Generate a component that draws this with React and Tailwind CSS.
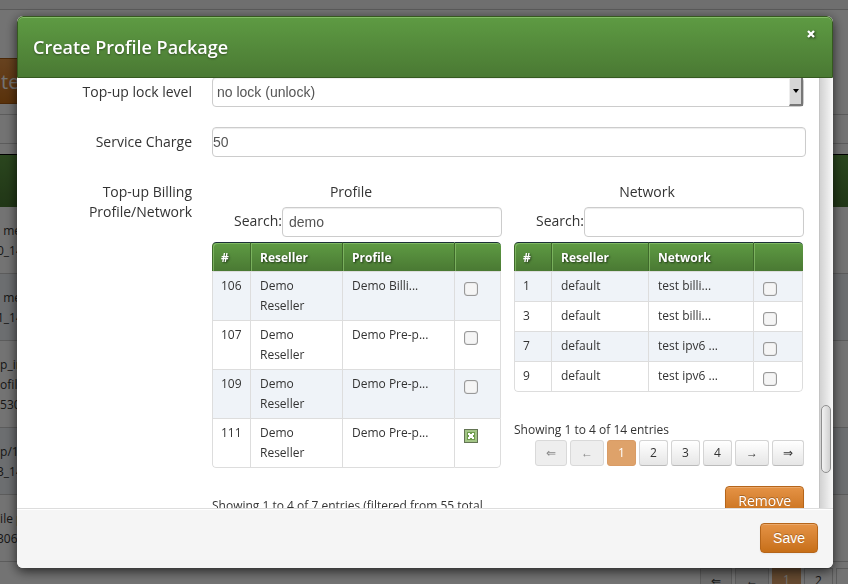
const PROFILES = [
  { id: 106, reseller: "Demo Reseller", name: "Demo Billi..." },
  { id: 107, reseller: "Demo Reseller", name: "Demo Pre-p..." },
  { id: 109, reseller: "Demo Reseller", name: "Demo Pre-p..." },
  { id: 111, reseller: "Demo Reseller", name: "Demo Pre-p...", checked: true },
];

const NETWORKS = [
  { id: 1, reseller: "default", name: "test billi..." },
  { id: 3, reseller: "default", name: "test billi..." },
  { id: 7, reseller: "default", name: "test ipv6 ..." },
  { id: 9, reseller: "default", name: "test ipv6 ..." },
];

const PAGE_ROWS = [
  { lines: ["\u00a0\u00a0me", "0_14"] },
  { lines: ["\u00a0\u00a0me", "1_14"] },
  { lines: ["\u00a0p_in", "\u00a0ofile", "\u00a0530"] },
  { lines: ["\u00a0p/1", "3_14"] },
  { lines: ["\u00a0ile p", "306"] },
];

const PAGES = [
  { label: "⇐", width: "w-8", state: "disabled" },
  { label: "←", width: "w-[34px]", state: "disabled" },
  { label: "1", width: "w-[29px]", state: "active" },
  { label: "2", width: "w-[29px]" },
  { label: "3", width: "w-[29px]" },
  { label: "4", width: "w-[29px]" },
  { label: "→", width: "w-[34px]" },
  { label: "⇒", width: "w-8" },
];

const FIELD =
  "h-[30px] rounded border border-[#ccc] bg-white font-['Liberation_Sans',sans-serif] text-sm text-[#555] shadow-[inset_0_1px_1px_rgba(0,0,0,0.075)] outline-none";
const ORANGE =
  "h-[30px] rounded border border-[#b5651a] bg-linear-to-b from-[#e59345] to-[#c76f17] px-3 text-sm leading-5 text-white [text-shadow:0_-1px_0_rgba(0,0,0,0.25)] shadow-[inset_0_1px_0_rgba(255,255,255,0.2),0_1px_2px_rgba(0,0,0,0.05)]";

function pageClass(state) {
  if (state === "active") return "border-[#d99c66] bg-[#dea26a] text-white";
  if (state === "disabled") return "border-[#d9d9d9] bg-[#eee] text-[#888]";
  return "border-[#d4d4d4] border-b-[#bbb] bg-linear-to-b from-white to-[#e6e6e6] text-[#333]";
}

function Pagination() {
  return (
    <nav className="flex justify-end gap-[3px]" aria-label="Pages">
      {PAGES.map((p) => (
        <button
          key={p.label}
          type="button"
          disabled={p.state === "disabled"}
          className={`h-[26px] shrink-0 rounded-[3px] border text-center text-xs leading-5 ${p.width} ${pageClass(p.state)}`}
        >
          {p.label}
        </button>
      ))}
    </nav>
  );
}

function PickTable({ title, columns, rows }) {
  const th =
    "h-[29px] border-t border-l border-t-[#1c3038] border-l-[#3f692b] bg-linear-to-b from-[#5e9b43] to-[#4a7933] pt-0.5 text-left text-xs font-bold text-white [text-shadow:1px_1px_2px_rgba(0,0,0,0.6)] shadow-[inset_1px_1px_0_rgba(140,195,110,0.7)]";
  const td = "border-t border-l border-[#ddd] py-1 align-top leading-5";
  return (
    <table className="mt-[5px] mr-px w-[calc(100%-1px)] table-fixed border-separate border-spacing-0 overflow-hidden rounded text-xs">
      <colgroup>
        {columns.map((c, i) => <col key={i} className={c} />)}
        <col />
      </colgroup>
      <thead>
        <tr>
          <th className={`${th} rounded-tl pl-2`}>#</th>
          <th className={`${th} pl-[9px]`}>Reseller</th>
          <th className={`${th} pl-[9px]`}>{title}</th>
          <th className={`${th} rounded-tr`} aria-label="Selected" />
        </tr>
      </thead>
      <tbody className="[&>tr:last-child>td]:border-b [&>tr:last-child>td:first-child]:rounded-bl [&>tr:last-child>td:last-child]:rounded-br">
        {rows.map((r) => (
          <tr key={r.id} className="h-[30px] odd:bg-[#eff3f8] last:h-[31px]">
            <td className={`${td} pl-2`}>{r.id}</td>
            <td className={`${td} pr-2 pl-[9px]`}>{r.reseller}</td>
            <td className={`${td} pr-2 pl-[9px]`}>{r.name}</td>
            <td className={`${td} border-r pl-[9px]`}>
              <span className="relative mt-1.5 block size-3.5">
                <input
                  type="checkbox"
                  defaultChecked={r.checked}
                  aria-label={`${title} ${r.id}`}
                  className="peer block size-3.5 appearance-none rounded-[3px] border border-[#999] bg-[#f5f5f5] shadow-[inset_0_0_1px_rgba(0,0,0,0.4)]"
                />
                <svg viewBox="0 0 14 14" className="pointer-events-none absolute inset-0 hidden size-3.5 peer-checked:block" aria-hidden="true">
                  <rect width="14" height="14" fill="#a3c586" />
                  <rect x=".5" y=".5" width="13" height="13" fill="none" stroke="#222" strokeDasharray="1 1" />
                  <rect x="3" y="3" width="8" height="8" fill="#6d9b4c" />
                  <path d="M4 4h2v1h2V4h2v2H9v2h1v2H8V9H6v1H4V8h1V6H4z" fill="#fff" />
                </svg>
              </span>
            </td>
          </tr>
        ))}
      </tbody>
    </table>
  );
}

function Picker({ title, titleClass, search, columns, rows, info, children }) {
  const id = `search-${title.toLowerCase()}`;
  return (
    <section className="min-w-0">
      <h4 className={`text-center leading-5 ${titleClass}`}>{title}</h4>
      <div className="mt-[5px] flex justify-end">
        <label htmlFor={id} className="pt-1 leading-5">Search:</label>
        <input id={id} type="text" defaultValue={search} className={`${FIELD} w-[220px] px-1.5`} />
      </div>
      <PickTable title={title} columns={columns} rows={rows} />
      <p className="mt-7 text-xs leading-5">{info}</p>
      {children}
    </section>
  );
}

function PageBehind() {
  return (
    <div className="h-screen overflow-hidden bg-white" aria-hidden="true">
      <div className="h-[10px] border-b border-[#c8c8c8] bg-[#f6f6f6]" />
      <div className="mt-12 h-[46px] w-[120px] border border-l-0 border-[#a85a10] bg-linear-to-b from-[#e59345] to-[#c76f17] pl-px text-xl leading-[46px] text-white">te</div>
      <div className="mt-2.5 h-[30px] border-y border-[#ccc]" />
      <div className="mt-2.5 h-[53px] border-t border-black bg-linear-to-b from-[#5e9b43] to-[#4a7933]" />
      {PAGE_ROWS.map((row, i) => (
        <div key={i} className="border-b border-[#ccc] pt-3.5 pb-3 text-xs leading-5 odd:bg-white even:bg-[#eff3f8]">
          {row.lines.map((l) => <p key={l} className="-ml-[3px]">{l}</p>)}
        </div>
      ))}
      <div className="mt-1.5 flex justify-end gap-[3px] text-xs">
        <span className="h-[26px] w-8 border border-[#ccc] bg-[#eee] pt-1 text-center">⇐</span>
        <span className="h-[26px] w-[34px] border border-[#ccc] bg-[#eee] pt-1 text-center">←</span>
        <span className="h-[26px] w-[29px] bg-[#dea26a] pt-1 text-center text-white">1</span>
        <span className="h-[26px] w-[29px] border border-[#ccc] pt-1 text-center">2</span>
        <span className="h-[26px] w-3 border border-r-0 border-[#ccc]" />
      </div>
    </div>
  );
}

export default function App() {
  return (
    <div className="font-['Open_Sans',sans-serif] text-sm text-[#333]">
      <PageBehind />
      <div className="fixed inset-0 flex bg-black/55 pt-4 pr-[15px] pb-4 pl-[17px]">
        <div role="dialog" aria-labelledby="dialog-title" className="flex min-w-0 flex-1 flex-col overflow-hidden rounded-md bg-white shadow-[0_3px_12px_rgba(0,0,0,0.7)]">
          <header className="flex h-[62px] shrink-0 items-start justify-between rounded-t-md border border-[#35591f] bg-linear-to-b from-[#5e9b43] to-[#4a7933] pr-[17px] pl-[15px] shadow-[inset_0_1px_0_rgba(160,210,130,0.6)]">
            <h3 id="dialog-title" className="pt-[15px] text-lg leading-[30px] font-semibold text-white [text-shadow:0_1px_2px_rgba(0,0,0,0.4)]">Create Profile Package</h3>
            <button aria-label="Close" className="mt-[13px]">
              <svg viewBox="0 0 8 8" className="size-2 text-white drop-shadow-[1px_1px_1px_rgba(0,0,0,0.6)]">
                <path d="M1 1l6 6M7 1L1 7" stroke="currentColor" strokeWidth="2.4" />
              </svg>
            </button>
          </header>

          <div className="flex min-h-0 flex-1 overflow-hidden">
            <form className="-mt-px min-w-0 flex-1 pr-[13px]">
              <div className="flex gap-5">
                <label htmlFor="lock" className="w-[175px] shrink-0 pt-[5px] text-right leading-5">Top-up lock level</label>
                <div className="relative mr-0.5 flex-1">
                  <select id="lock" className={`${FIELD} w-full appearance-none px-1`}>
                    <option>no lock (unlock)</option>
                  </select>
                  <span className="pointer-events-none absolute top-px right-px flex h-7 w-3.5 items-center justify-center border-r-2 border-b-2 border-l border-[#777] border-l-[#eee] bg-[#d6d6d6]">
                    <svg viewBox="0 0 6 4" className="h-1 w-1.5"><path d="M0 0h6L3 4z" fill="#000" /></svg>
                  </span>
                </div>
              </div>

              <div className="mt-5 flex gap-5">
                <label htmlFor="charge" className="w-[175px] shrink-0 pt-[5px] text-right leading-5">Service Charge</label>
                <input id="charge" type="text" defaultValue="50" className={`${FIELD} min-w-0 flex-1`} />
              </div>

              <div className="mt-5 flex gap-5 pt-[5px]">
                <p className="w-[175px] shrink-0 text-right leading-5">Top-up Billing Profile/Network</p>
                <div className="mr-0.5 grid min-w-0 flex-1 grid-cols-2 gap-3">
                  <Picker
                    title="Profile"
                    titleClass="pr-3"
                    search="demo"
                    columns={["w-[38px]", "w-[92px]", "w-[112px]"]}
                    rows={PROFILES}
                    info="Showing 1 to 4 of 7 entries (filtered from 55 total entries)"
                  />
                  <Picker
                    title="Network"
                    titleClass="pr-6"
                    search=""
                    columns={["w-[37px]", "w-[97px]", "w-[105px]"]}
                    rows={NETWORKS}
                    info="Showing 1 to 4 of 14 entries"
                  >
                    <Pagination />
                    <div className="mt-5 flex justify-end">
                      <button type="button" className={ORANGE}>Remove</button>
                    </div>
                  </Picker>
                </div>
              </div>
            </form>
            <div className="flex w-3.5 shrink-0 flex-col items-start border-l border-[#c4c4c4] bg-linear-to-r from-[#d2d2d2] to-[#f8f8f8] pt-[327px] pl-px">
              <div className="h-[68px] w-2.5 rounded-full border border-[#8f8f8f] bg-linear-to-r from-[#f2f2f2] to-[#d0d0d0]" />
            </div>
          </div>

          <footer className="flex h-[60px] shrink-0 items-start justify-end border-t border-[#ddd] bg-[#f5f5f5] pt-3.5 pr-[15px] shadow-[inset_0_1px_0_#fff]">
            <button className={`${ORANGE} font-['Liberation_Sans',sans-serif]`}>Save</button>
          </footer>
        </div>
      </div>
    </div>
  );
}
